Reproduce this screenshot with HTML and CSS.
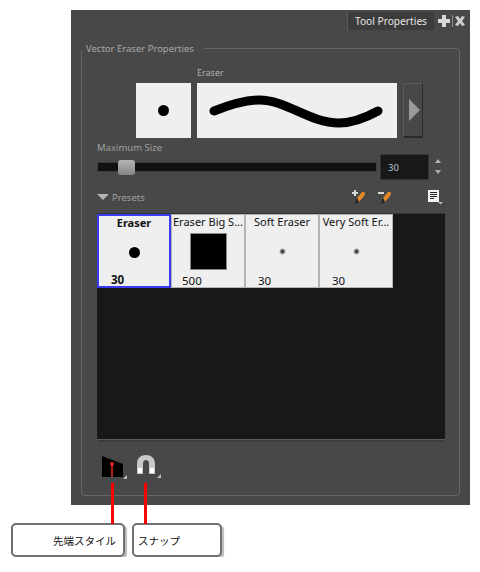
FILE: index.html
```html
<!DOCTYPE html>
<html lang="ja">

<head>
    <meta charset="UTF-8">
    <title>Tool Properties</title>
    <link rel="stylesheet" href="styles.css">
</head>

<body>
    <section class="panel">
        <div class="tabbar">
            <span class="tab">Tool Properties</span>
            <svg class="tab_icons" width="30" height="14" viewBox="0 0 30 14">
                <path d="M4 1h4v4h4v4H8v4H4V9H0V5h4z" fill="#d8d8d8" />
                <path d="M14.500 1v12" stroke="#8a8a8a" />
                <path d="M17 3l3-1 2 3 2-3 3 1-3 4 3 4-3 1-2-3-2 3-3-1 3-4z" fill="#d0d0d0" />
            </svg>
        </div>

        <fieldset class="props">
            <legend>Vector Eraser Properties</legend>

            <div class="preview_label">Eraser</div>
            <div class="preview_row">
                <div class="tip_box"><span class="dot"></span></div>
                <div class="stroke_box">
                    <svg width="200" height="54" viewBox="0 0 200 54">
                        <path d="M17 27C35 20 48 16 62 16C90 16 112 39 142 39C156 39 170 33 181 27" fill="none" stroke="#000" stroke-width="9" stroke-linecap="round" />
                    </svg>
                </div>
                <button class="arrow_btn"><span class="arrow"></span></button>
            </div>

            <div class="size_label">Maximum Size</div>
            <div class="size_row">
                <div class="slider"><span class="thumb"></span></div>
                <div class="size_input">30</div>
                <div class="spinner">
                    <span class="spin_up"></span>
                    <span class="spin_down"></span>
                </div>
            </div>

            <div class="presets_head">
                <span class="presets_arrow"></span>
                <span class="presets_title">Presets</span>
                <svg class="pencil_add" width="15" height="15" viewBox="0 0 15 15">
                    <path d="M2 0h2v2h2v2H4v2H2V4H0V2h2z" fill="#d8d8d8" />
                    <path d="M5 8L10 2Q12 1 13 3Q13 5 12 6L7 12z" fill="#e08a2a" />
                    <path d="M5 8L7 12L3 14z" fill="#222" />
                </svg>
                <svg class="pencil_del" width="15" height="15" viewBox="0 0 15 15">
                    <path d="M0 2h6v2H0z" fill="#d8d8d8" />
                    <path d="M5 8L10 2Q12 1 13 3Q13 5 12 6L7 12z" fill="#e08a2a" />
                    <path d="M5 8L7 12L3 14z" fill="#222" />
                </svg>
                <svg class="menu_icon" width="16" height="15" viewBox="0 0 16 15">
                    <path d="M0 0h11v12H0z" fill="#f4f4f4" />
                    <path d="M2 2.500h7M2 4.500h7M2 6.500h7M2 8.500h4" stroke="#222" />
                    <path d="M10 12h5l-2.500 2.500z" fill="#bbb" />
                </svg>
            </div>

            <div class="preset_list">
                <article class="preset selected">
                    <h3>Eraser</h3>
                    <div class="sample"><span class="dot"></span></div>
                    <p>30</p>
                </article>
                <article class="preset">
                    <h3>Eraser Big S...</h3>
                    <div class="sample"><span class="square"></span></div>
                    <p class="big">500</p>
                </article>
                <article class="preset">
                    <h3>Soft Eraser</h3>
                    <div class="sample"><span class="soft"></span></div>
                    <p>30</p>
                </article>
                <article class="preset">
                    <h3>Very Soft Er...</h3>
                    <div class="sample"><span class="soft"></span></div>
                    <p>30</p>
                </article>
            </div>

            <div class="bottom_tools">
                <div class="tool">
                    <svg width="21" height="21" viewBox="0 0 21 21">
                        <path d="M0 0L21 8V21H0z" fill="#000" />
                        <path d="M10 8v13" stroke="#b02020" stroke-width="2" />
                        <circle cx="10" cy="8" r="2" fill="#e02828" />
                    </svg>
                    <span class="corner"></span>
                </div>
                <div class="tool snap">
                    <svg width="18" height="19" viewBox="0 0 18 19">
                        <path d="M0 19V9C0 3 4 0 9 0C14 0 18 3 18 9V19H12V9C12 6 11 5 9 5C7 5 6 6 6 9V19z" fill="#c9c9c9" />
                        <path d="M1 13h4v5H1zM13 13h4v5h-4z" fill="#fff" />
                    </svg>
                    <span class="corner"></span>
                </div>
            </div>
        </fieldset>
    </section>

    <span class="pointer pointer_tip"></span>
    <span class="pointer pointer_snap"></span>

    <div class="callouts">
        <div class="callout callout_tip">先端スタイル</div>
        <div class="callout callout_snap">スナップ</div>
    </div>
</body>

</html>
```

FILE: styles.css
```css
* {
    box-sizing: border-box;
}

body {
    margin: 0;
    background-color: #fff;
    font-family: "Liberation Sans", "Noto Sans CJK JP", sans-serif;
    font-size: 10px;
}

.panel {
    width: 399px;
    height: 495px;
    margin: 10px 0 0 71px;
    padding: 2px 10px 0 10px;
    background-color: #484848;
}

.tabbar {
    display: flex;
    justify-content: flex-end;
    align-items: center;
    height: 18px;
    margin-right: -8px;
}

.tab {
    width: 87px;
    height: 18px;
    margin-right: 4px;
    line-height: 18px;
    text-align: center;
    font-family: "Noto Sans", sans-serif;
    font-size: 10.200px;
    color: #e6e6e6;
    background-color: #3c3c3c;
    border-left: 1px solid #5a5a5a;
}

.props {
    position: relative;
    height: 454px;
    margin: 12px 0 0 0;
    padding: 0 14px 0 15px;
    border: 1px solid #666;
    border-radius: 4px;
    min-width: 0;
}

.props legend {
    margin-left: -15px;
    padding: 0 10px 0 4px;
    font-family: "Noto Sans", sans-serif;
    font-size: 9.500px;
    line-height: 13px;
    color: #a8a8a8;
}

.preview_label {
    margin: 12px 0 0 100px;
    height: 11px;
    line-height: 11px;
    font-family: "Noto Sans", sans-serif;
    font-size: 9px;
    color: #b0b0b0;
}

.preview_row {
    display: flex;
    height: 55px;
    margin: 5px 0 0 39px;
}

.tip_box,
.stroke_box {
    display: flex;
    align-items: center;
    justify-content: center;
    height: 55px;
    background-color: #efefef;
}

.tip_box {
    width: 55px;
    margin-right: 6px;
}

.stroke_box {
    width: 200px;
    margin-right: 6px;
}

.dot {
    display: block;
    width: 11px;
    height: 11px;
    border-radius: 50%;
    background-color: #000;
}

.arrow_btn {
    display: flex;
    align-items: center;
    justify-content: center;
    width: 20px;
    height: 55px;
    padding: 0 0 0 3px;
    background-color: #484848;
    border: 1px solid #2a2a2a;
    border-top-color: #5c5c5c;
    border-left-color: #5c5c5c;
    border-bottom-width: 2px;
}

.arrow {
    border-left: 11px solid #9a9a9a;
    border-top: 11px solid transparent;
    border-bottom: 11px solid transparent;
}

.size_label {
    height: 12px;
    margin-top: 4px;
    line-height: 12px;
    font-family: "Noto Sans", sans-serif;
    font-size: 9.500px;
    color: #a0a0a0;
}

.size_row {
    display: flex;
    align-items: center;
    height: 25px;
}

.slider {
    position: relative;
    width: 280px;
    height: 10px;
    background-color: #111;
    border: 1px solid #3c3c3c;
}

.thumb {
    position: absolute;
    left: 20px;
    top: -3px;
    width: 17px;
    height: 15px;
    border-radius: 3px;
    background: linear-gradient(#b4b4b4, #858585);
}

.size_input {
    width: 49px;
    height: 26px;
    margin-left: 3px;
    padding-left: 7px;
    line-height: 26px;
    font-family: "Noto Sans", sans-serif;
    font-size: 9.500px;
    color: #b8c4d0;
    background-color: #181818;
    border: 1px solid #343434;
}

.spinner {
    display: flex;
    flex-direction: column;
    gap: 7px;
    margin-left: 6px;
}

.spin_up,
.spin_down {
    width: 0;
    border-left: 3px solid transparent;
    border-right: 3px solid transparent;
}

.spin_up {
    border-bottom: 4px solid #b0b0b0;
}

.spin_down {
    border-top: 4px solid #b0b0b0;
}

.presets_head {
    display: flex;
    align-items: center;
    height: 16px;
    margin-top: 10px;
}

.presets_head svg {
    flex-shrink: 0;
}

.presets_arrow {
    width: 0;
    margin-right: 3px;
    border-left: 6px solid transparent;
    border-right: 6px solid transparent;
    border-top: 6px solid #b4b4b4;
}

.presets_title {
    font-family: "Noto Sans", sans-serif;
    font-size: 9.500px;
    color: #a0a0a0;
}

.pencil_add {
    margin-left: auto;
}

.pencil_del {
    margin-left: 11px;
}

.menu_icon {
    margin: 0 1px 0 35px;
}

.preset_list {
    display: flex;
    align-items: flex-start;
    height: 227px;
    margin-top: 8px;
    background-color: #181818;
    border-top: 1px solid #333;
    border-bottom: 1px solid #5c5c5c;
    box-shadow: 0 3px 0 -1px #3c3c3c;
}

.preset {
    position: relative;
    width: 74px;
    height: 74px;
    background-color: #efefef;
    border: 1px solid #b4b4b4;
    color: #111;
    text-align: center;
}

.preset h3 {
    margin: 0;
    font-family: "Noto Sans", sans-serif;
    font-size: 11px;
    font-weight: 400;
    line-height: 14px;
    white-space: nowrap;
}

.preset p {
    position: absolute;
    left: 12px;
    bottom: -1px;
    margin: 0;
    font-family: "Noto Sans", sans-serif;
    font-size: 11.500px;
    line-height: 14px;
}

.preset p.big {
    left: 10px;
}

.selected {
    border: 2px solid #3a3af0;
}

.selected h3,
.selected p {
    font-weight: 700;
}

.sample {
    display: flex;
    align-items: center;
    justify-content: center;
    height: 37px;
    margin-top: 4px;
}

.square {
    display: block;
    width: 37px;
    height: 37px;
    background-color: #000;
    border: 1px solid #888;
}

.soft {
    display: block;
    width: 7px;
    height: 7px;
    border-radius: 50%;
    background: radial-gradient(#333 15%, #efefef 72%);
}

.bottom_tools {
    display: flex;
    gap: 14px;
    height: 23px;
    margin: 16px 0 0 5px;
}

.tool {
    position: relative;
    width: 21px;
    height: 23px;
}

.tool.snap {
    width: 20px;
    margin-top: -1px;
}

.corner {
    position: absolute;
    right: -4px;
    bottom: 0;
    border-left: 4px solid transparent;
    border-bottom: 4px solid #c0c0c0;
}

.pointer {
    position: absolute;
    top: 483px;
    width: 3px;
    height: 41px;
    background-color: #f00;
}

.pointer_tip {
    left: 111px;
}

.pointer_snap {
    left: 144px;
}

.callouts {
    display: flex;
    gap: 7px;
    margin: 18px 0 0 11px;
}

.callout {
    display: flex;
    align-items: center;
    height: 34px;
    font-size: 10.500px;
    color: #111;
    background-color: #fff;
    border: 2px solid #707070;
    border-radius: 5px;
    box-shadow: 2px 2px 1px #bbb;
}

.callout_tip {
    width: 114px;
    padding-left: 40px;
}

.callout_snap {
    width: 90px;
    padding-left: 4px;
}
```
